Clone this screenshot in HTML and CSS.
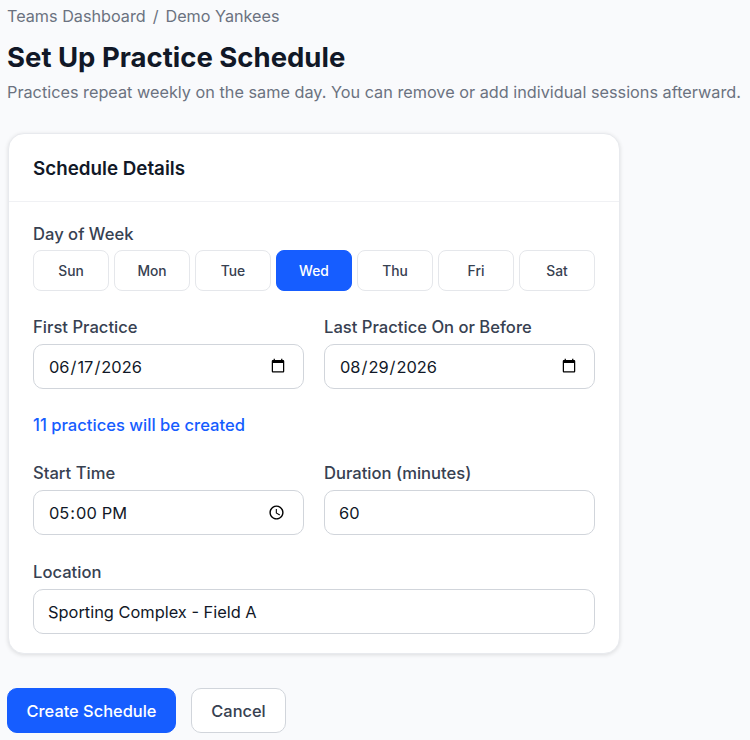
FILE: index.html
```html
<!DOCTYPE html>
<html lang="en">
<head>
<meta charset="utf-8">
<title>Set Up Practice Schedule</title>
<link rel="stylesheet" href="styles.css">
</head>
<body>
<main class="page">
  <nav class="crumbs"><a>Teams Dashboard</a><span class="sep">/</span><a>Demo Yankees</a></nav>
  <h1>Set Up Practice Schedule</h1>
  <p class="sub">Practices repeat weekly on the same day. You can remove or add individual sessions afterward.</p>
  <section class="card">
    <header class="card-head"><h2>Schedule Details</h2></header>
    <div class="card-body">
      <div class="field days-field">
        <span class="label">Day of Week</span>
        <div class="days">
          <button class="day">Sun</button>
          <button class="day">Mon</button>
          <button class="day">Tue</button>
          <button class="day active">Wed</button>
          <button class="day">Thu</button>
          <button class="day">Fri</button>
          <button class="day">Sat</button>
        </div>
      </div>
      <div class="row">
        <label class="field"><span class="label">First Practice</span><input class="input" type="date" value="2026-06-17"></label>
        <label class="field"><span class="label">Last Practice On or Before</span><input class="input" type="date" value="2026-08-29"></label>
      </div>
      <p class="count">11 practices will be created</p>
      <div class="row">
        <label class="field"><span class="label">Start Time</span><input class="input" type="time" value="17:00"></label>
        <label class="field"><span class="label">Duration (minutes)</span><input class="input" type="text" value="60"></label>
      </div>
      <label class="field"><span class="label">Location</span><input class="input" type="text" value="Sporting Complex - Field A"></label>
    </div>
  </section>
  <div class="actions">
    <button class="btn primary">Create Schedule</button>
    <button class="btn secondary">Cancel</button>
  </div>
</main>
</body>
</html>
```
FILE: styles.css
```css
* { box-sizing: border-box; }
html, body { margin: 0; height: 100%; }
body {
  background: #f9fafc;
  font-family: Inter, "Liberation Sans", sans-serif;
  color: #111827;
  overflow: hidden;
}
.page { padding: 6px 7px 0; }
.crumbs {
  display: flex;
  gap: 7px;
  font-size: 16.2px;
  line-height: 20px;
  color: #6b7280;
}
h1 {
  margin: 14px 0 0;
  font-size: 27.5px;
  line-height: 34px;
  font-weight: 700;
  color: #111827;
}
.sub {
  margin: 7px 0 0;
  font-size: 16.25px;
  line-height: 22px;
  color: #6b7280;
  white-space: nowrap;
}
.card {
  width: 612px;
  margin: 30px 0 0 1px;
  background: #fff;
  border: 1px solid #e8eaee;
  border-radius: 16px;
  box-shadow: 0 1px 4px rgba(0,0,0,.12);
}
.card-head {
  height: 68px;
  display: flex;
  align-items: center;
  padding: 1px 24px 0;
  border-bottom: 1px solid #f0f1f4;
}
h2 {
  margin: 0;
  font-size: 18.8px;
  font-weight: 600;
  color: #111827;
}
.card-body {
  padding: 22px 24px 19px;
  display: flex;
  flex-direction: column;
}
.field { display: flex; flex-direction: column; gap: 6px; }
.days-field { gap: 5px; }
.label {
  font-size: 16.6px;
  line-height: 21px;
  font-weight: 450;
  color: #374151;
}
.days {
  display: grid;
  grid-template-columns: repeat(7, 1fr);
  gap: 5px;
}
.day {
  height: 41px;
  padding: 0;
  background: #fff;
  border: 1px solid #e5e7eb;
  border-radius: 8px;
  font: 450 13.8px Inter, "Liberation Sans", sans-serif;
  color: #374151;
}
.day.active {
  background: #165dff;
  border-color: #165dff;
  color: #fff;
}
.row {
  display: grid;
  grid-template-columns: 1fr 1fr;
  gap: 20px;
  margin-top: 26px;
}
.input {
  height: 45px;
  width: 100%;
  padding: 0 15px 0 14px;
  background: #fff;
  border: 1px solid #d1d5db;
  border-radius: 10px;
  font: 400 16.4px Inter, "Liberation Sans", sans-serif;
  color: #111827;
}
.count {
  margin: 26px 0 0;
  font-size: 16.6px;
  line-height: 21px;
  font-weight: 450;
  color: #165dff;
}
.row + .field { margin-top: 27px; }
.count + .row { margin-top: 27px; }
.actions {
  display: flex;
  gap: 15px;
  margin-top: 34px;
}
.btn {
  height: 45px;
  border-radius: 10px;
  font: 450 16.4px Inter, "Liberation Sans", sans-serif;
}
.primary {
  width: 169px;
  background: #165dff;
  border: 1px solid #165dff;
  color: #fff;
}
.secondary {
  width: 95px;
  background: #fff;
  border: 1px solid #d1d5db;
  color: #374151;
}
```
